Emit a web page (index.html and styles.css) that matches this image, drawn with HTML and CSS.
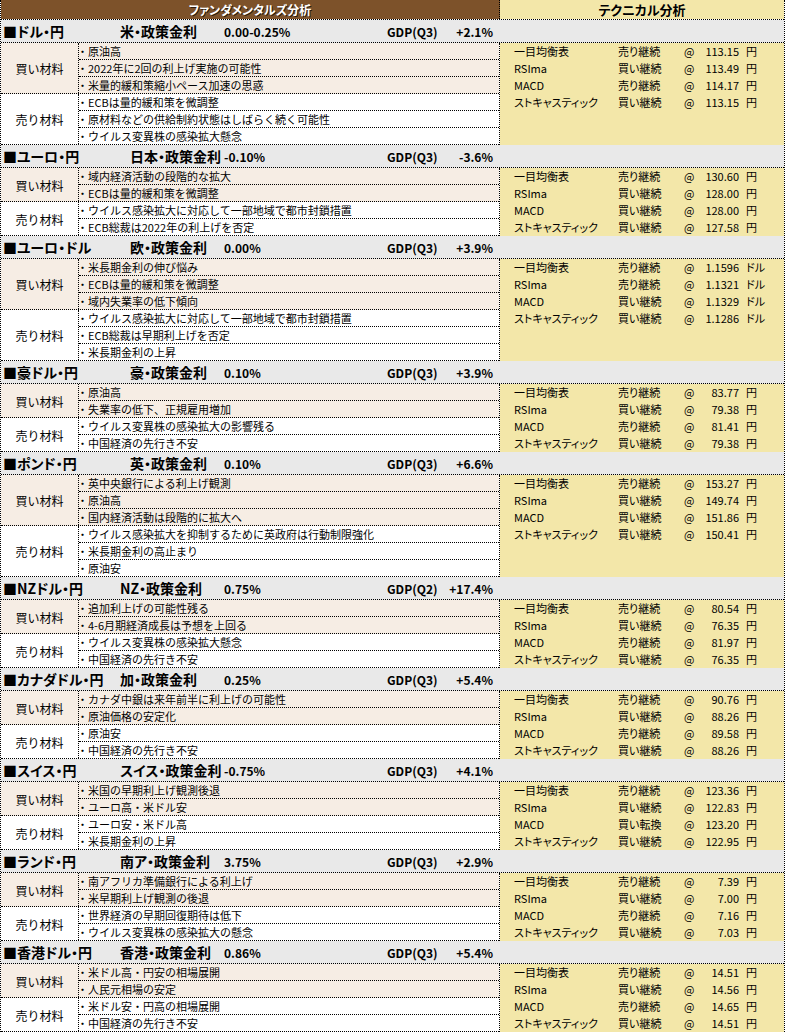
FILE: index.html
```html
<!DOCTYPE html>
<html lang="ja">
<head>
<meta charset="utf-8">
<title>ファンダメンタルズ分析 / テクニカル分析</title>
<link rel="stylesheet" href="styles.css">
</head>
<body>
<div class="sheet">
  <div class="head">
    <div class="h-fund">ファンダメンタルズ分析</div>
    <div class="h-tech">テクニカル分析</div>
  </div>

  <section class="pair">
    <div class="pair-head"><span class="pname">■ドル・円</span><span class="rname">米・政策金利</span><span class="rate">0.00-0.25%</span><span class="gdp">GDP(Q3)</span><span class="gval">+2.1%</span></div>
    <div class="pair-body">
      <div class="fund">
        <div class="group buy"><div class="label">買い材料</div><ul class="items"><li>・原油高</li><li>・2022年に2回の利上げ実施の可能性</li><li>・米量的緩和策縮小ペース加速の思惑</li></ul></div>
        <div class="group sell"><div class="label">売り材料</div><ul class="items"><li>・ECBは量的緩和策を微調整</li><li>・原材料などの供給制約状態はしばらく続く可能性</li><li>・ウイルス変異株の感染拡大懸念</li></ul></div>
      </div>
      <div class="tech">
        <div class="trow"><span>一目均衡表</span><span>売り継続</span><span>@</span><span class="price">113.15</span><span class="unit">円</span></div>
        <div class="trow"><span>RSIma</span><span>買い継続</span><span>@</span><span class="price">113.49</span><span class="unit">円</span></div>
        <div class="trow"><span>MACD</span><span>売り継続</span><span>@</span><span class="price">114.17</span><span class="unit">円</span></div>
        <div class="trow"><span>ストキャスティック</span><span>買い継続</span><span>@</span><span class="price">113.15</span><span class="unit">円</span></div>
      </div>
    </div>
  </section>

  <section class="pair">
    <div class="pair-head"><span class="pname">■ユーロ・円</span><span class="rname indent">日本・政策金利</span><span class="rate">-0.10%</span><span class="gdp">GDP(Q3)</span><span class="gval">-3.6%</span></div>
    <div class="pair-body">
      <div class="fund">
        <div class="group buy"><div class="label">買い材料</div><ul class="items"><li>・域内経済活動の段階的な拡大</li><li>・ECBは量的緩和策を微調整</li></ul></div>
        <div class="group sell"><div class="label">売り材料</div><ul class="items"><li>・ウイルス感染拡大に対応して一部地域で都市封鎖措置</li><li>・ECB総裁は2022年の利上げを否定</li></ul></div>
      </div>
      <div class="tech">
        <div class="trow"><span>一目均衡表</span><span>売り継続</span><span>@</span><span class="price">130.60</span><span class="unit">円</span></div>
        <div class="trow"><span>RSIma</span><span>買い継続</span><span>@</span><span class="price">128.00</span><span class="unit">円</span></div>
        <div class="trow"><span>MACD</span><span>買い継続</span><span>@</span><span class="price">128.00</span><span class="unit">円</span></div>
        <div class="trow"><span>ストキャスティック</span><span>買い継続</span><span>@</span><span class="price">127.58</span><span class="unit">円</span></div>
      </div>
    </div>
  </section>

  <section class="pair">
    <div class="pair-head"><span class="pname">■ユーロ・ドル</span><span class="rname indent">欧・政策金利</span><span class="rate">0.00%</span><span class="gdp">GDP(Q3)</span><span class="gval">+3.9%</span></div>
    <div class="pair-body">
      <div class="fund">
        <div class="group buy"><div class="label">買い材料</div><ul class="items"><li>・米長期金利の伸び悩み</li><li>・ECBは量的緩和策を微調整</li><li>・域内失業率の低下傾向</li></ul></div>
        <div class="group sell"><div class="label">売り材料</div><ul class="items"><li>・ウイルス感染拡大に対応して一部地域で都市封鎖措置</li><li>・ECB総裁は早期利上げを否定</li><li>・米長期金利の上昇</li></ul></div>
      </div>
      <div class="tech">
        <div class="trow"><span>一目均衡表</span><span>売り継続</span><span>@</span><span class="price">1.1596</span><span class="unit">ドル</span></div>
        <div class="trow"><span>RSIma</span><span>売り継続</span><span>@</span><span class="price">1.1321</span><span class="unit">ドル</span></div>
        <div class="trow"><span>MACD</span><span>買い継続</span><span>@</span><span class="price">1.1329</span><span class="unit">ドル</span></div>
        <div class="trow"><span>ストキャスティック</span><span>買い継続</span><span>@</span><span class="price">1.1286</span><span class="unit">ドル</span></div>
      </div>
    </div>
  </section>

  <section class="pair">
    <div class="pair-head"><span class="pname">■豪ドル・円</span><span class="rname indent">豪・政策金利</span><span class="rate">0.10%</span><span class="gdp">GDP(Q3)</span><span class="gval">+3.9%</span></div>
    <div class="pair-body">
      <div class="fund">
        <div class="group buy"><div class="label">買い材料</div><ul class="items"><li>・原油高</li><li>・失業率の低下、正規雇用増加</li></ul></div>
        <div class="group sell"><div class="label">売り材料</div><ul class="items"><li>・ウイルス変異株の感染拡大の影響残る</li><li>・中国経済の先行き不安</li></ul></div>
      </div>
      <div class="tech">
        <div class="trow"><span>一目均衡表</span><span>売り継続</span><span>@</span><span class="price">83.77</span><span class="unit">円</span></div>
        <div class="trow"><span>RSIma</span><span>買い継続</span><span>@</span><span class="price">79.38</span><span class="unit">円</span></div>
        <div class="trow"><span>MACD</span><span>売り継続</span><span>@</span><span class="price">81.41</span><span class="unit">円</span></div>
        <div class="trow"><span>ストキャスティック</span><span>買い継続</span><span>@</span><span class="price">79.38</span><span class="unit">円</span></div>
      </div>
    </div>
  </section>

  <section class="pair">
    <div class="pair-head"><span class="pname">■ポンド・円</span><span class="rname indent">英・政策金利</span><span class="rate">0.10%</span><span class="gdp">GDP(Q3)</span><span class="gval">+6.6%</span></div>
    <div class="pair-body">
      <div class="fund">
        <div class="group buy"><div class="label">買い材料</div><ul class="items"><li>・英中央銀行による利上げ観測</li><li>・原油高</li><li>・国内経済活動は段階的に拡大へ</li></ul></div>
        <div class="group sell"><div class="label">売り材料</div><ul class="items"><li>・ウイルス感染拡大を抑制するために英政府は行動制限強化</li><li>・米長期金利の高止まり</li><li>・原油安</li></ul></div>
      </div>
      <div class="tech">
        <div class="trow"><span>一目均衡表</span><span>売り継続</span><span>@</span><span class="price">153.27</span><span class="unit">円</span></div>
        <div class="trow"><span>RSIma</span><span>買い継続</span><span>@</span><span class="price">149.74</span><span class="unit">円</span></div>
        <div class="trow"><span>MACD</span><span>買い継続</span><span>@</span><span class="price">151.86</span><span class="unit">円</span></div>
        <div class="trow"><span>ストキャスティック</span><span>買い継続</span><span>@</span><span class="price">150.41</span><span class="unit">円</span></div>
      </div>
    </div>
  </section>

  <section class="pair">
    <div class="pair-head"><span class="pname">■NZドル・円</span><span class="rname">NZ・政策金利</span><span class="rate">0.75%</span><span class="gdp">GDP(Q2)</span><span class="gval">+17.4%</span></div>
    <div class="pair-body">
      <div class="fund">
        <div class="group buy"><div class="label">買い材料</div><ul class="items"><li>・追加利上げの可能性残る</li><li>・4-6月期経済成長は予想を上回る</li></ul></div>
        <div class="group sell"><div class="label">売り材料</div><ul class="items"><li>・ウイルス変異株の感染拡大懸念</li><li>・中国経済の先行き不安</li></ul></div>
      </div>
      <div class="tech">
        <div class="trow"><span>一目均衡表</span><span>売り継続</span><span>@</span><span class="price">80.54</span><span class="unit">円</span></div>
        <div class="trow"><span>RSIma</span><span>買い継続</span><span>@</span><span class="price">76.35</span><span class="unit">円</span></div>
        <div class="trow"><span>MACD</span><span>売り継続</span><span>@</span><span class="price">81.97</span><span class="unit">円</span></div>
        <div class="trow"><span>ストキャスティック</span><span>買い継続</span><span>@</span><span class="price">76.35</span><span class="unit">円</span></div>
      </div>
    </div>
  </section>

  <section class="pair">
    <div class="pair-head"><span class="pname">■カナダドル・円</span><span class="rname">加・政策金利</span><span class="rate">0.25%</span><span class="gdp">GDP(Q3)</span><span class="gval">+5.4%</span></div>
    <div class="pair-body">
      <div class="fund">
        <div class="group buy"><div class="label">買い材料</div><ul class="items"><li>・カナダ中銀は来年前半に利上げの可能性</li><li>・原油価格の安定化</li></ul></div>
        <div class="group sell"><div class="label">売り材料</div><ul class="items"><li>・原油安</li><li>・中国経済の先行き不安</li></ul></div>
      </div>
      <div class="tech">
        <div class="trow"><span>一目均衡表</span><span>売り継続</span><span>@</span><span class="price">90.76</span><span class="unit">円</span></div>
        <div class="trow"><span>RSIma</span><span>買い継続</span><span>@</span><span class="price">88.26</span><span class="unit">円</span></div>
        <div class="trow"><span>MACD</span><span>売り継続</span><span>@</span><span class="price">89.58</span><span class="unit">円</span></div>
        <div class="trow"><span>ストキャスティック</span><span>買い継続</span><span>@</span><span class="price">88.26</span><span class="unit">円</span></div>
      </div>
    </div>
  </section>

  <section class="pair">
    <div class="pair-head"><span class="pname">■スイス・円</span><span class="rname">スイス・政策金利</span><span class="rate">-0.75%</span><span class="gdp">GDP(Q3)</span><span class="gval">+4.1%</span></div>
    <div class="pair-body">
      <div class="fund">
        <div class="group buy"><div class="label">買い材料</div><ul class="items"><li>・米国の早期利上げ観測後退</li><li>・ユーロ高・米ドル安</li></ul></div>
        <div class="group sell"><div class="label">売り材料</div><ul class="items"><li>・ユーロ安・米ドル高</li><li>・米長期金利の上昇</li></ul></div>
      </div>
      <div class="tech">
        <div class="trow"><span>一目均衡表</span><span>売り継続</span><span>@</span><span class="price">123.36</span><span class="unit">円</span></div>
        <div class="trow"><span>RSIma</span><span>買い継続</span><span>@</span><span class="price">122.83</span><span class="unit">円</span></div>
        <div class="trow"><span>MACD</span><span>買い転換</span><span>@</span><span class="price">123.20</span><span class="unit">円</span></div>
        <div class="trow"><span>ストキャスティック</span><span>買い継続</span><span>@</span><span class="price">122.95</span><span class="unit">円</span></div>
      </div>
    </div>
  </section>

  <section class="pair">
    <div class="pair-head"><span class="pname">■ランド・円</span><span class="rname">南ア・政策金利</span><span class="rate">3.75%</span><span class="gdp">GDP(Q3)</span><span class="gval">+2.9%</span></div>
    <div class="pair-body">
      <div class="fund">
        <div class="group buy"><div class="label">買い材料</div><ul class="items"><li>・南アフリカ準備銀行による利上げ</li><li>・米早期利上げ観測の後退</li></ul></div>
        <div class="group sell"><div class="label">売り材料</div><ul class="items"><li>・世界経済の早期回復期待は低下</li><li>・ウイルス変異株の感染拡大の懸念</li></ul></div>
      </div>
      <div class="tech">
        <div class="trow"><span>一目均衡表</span><span>売り継続</span><span>@</span><span class="price">7.39</span><span class="unit">円</span></div>
        <div class="trow"><span>RSIma</span><span>買い継続</span><span>@</span><span class="price">7.00</span><span class="unit">円</span></div>
        <div class="trow"><span>MACD</span><span>売り継続</span><span>@</span><span class="price">7.16</span><span class="unit">円</span></div>
        <div class="trow"><span>ストキャスティック</span><span>買い継続</span><span>@</span><span class="price">7.03</span><span class="unit">円</span></div>
      </div>
    </div>
  </section>

  <section class="pair">
    <div class="pair-head"><span class="pname">■香港ドル・円</span><span class="rname">香港・政策金利</span><span class="rate">0.86%</span><span class="gdp">GDP(Q3)</span><span class="gval">+5.4%</span></div>
    <div class="pair-body">
      <div class="fund">
        <div class="group buy"><div class="label">買い材料</div><ul class="items"><li>・米ドル高・円安の相場展開</li><li>・人民元相場の安定</li></ul></div>
        <div class="group sell"><div class="label">売り材料</div><ul class="items"><li>・米ドル安・円高の相場展開</li><li>・中国経済の先行き不安</li></ul></div>
      </div>
      <div class="tech">
        <div class="trow"><span>一目均衡表</span><span>売り継続</span><span>@</span><span class="price">14.51</span><span class="unit">円</span></div>
        <div class="trow"><span>RSIma</span><span>買い継続</span><span>@</span><span class="price">14.56</span><span class="unit">円</span></div>
        <div class="trow"><span>MACD</span><span>売り継続</span><span>@</span><span class="price">14.65</span><span class="unit">円</span></div>
        <div class="trow"><span>ストキャスティック</span><span>買い継続</span><span>@</span><span class="price">14.51</span><span class="unit">円</span></div>
      </div>
    </div>
  </section>
</div>
</body>
</html>
```

FILE: styles.css
```css
* { box-sizing: border-box; }

body {
  margin: 0;
  background: #ffffff;
  color: #000000;
  font-family: "Noto Sans CJK JP", "Noto Sans", sans-serif;
}

.sheet {
  width: 785px;
  border-left: 1px dotted #000;
  border-right: 1px dotted #000;
}

/* top header */
.head {
  display: flex;
  height: 20px;
  border-bottom: 1px dotted #000;
}
.h-fund {
  width: 499px;
  flex: none;
  background: #7d522a;
  border-right: 1px dotted #000;
  color: #ffffff;
  font-weight: bold;
  font-size: 12px;
  line-height: 19px;
  text-align: center;
  font-feature-settings: "palt" 1;
  text-shadow: 1px 1px 0 #2e1c0c;
}
.h-tech {
  flex: 1;
  background: #f3e7a9;
  font-weight: bold;
  font-size: 13px;
  line-height: 19px;
  text-align: center;
  font-feature-settings: "palt" 1;
}

/* pair section header */
.pair-head {
  display: grid;
  grid-template-columns: 117px 104px 163px 58px 48px 1fr;
  align-items: center;
  height: 23px;
  padding-left: 2px;
  background: #e9e9e9;
  border-bottom: 1px dotted #000;
  font-weight: bold;
  white-space: nowrap;
}
.pname, .rname {
  font-size: 14px;
  font-feature-settings: "palt" 1;
}
.rname.indent { padding-left: 10px; }
.rate, .gdp, .gval {
  font-size: 12px;
}
.gval { text-align: right; }

/* body */
.pair-body {
  display: flex;
}
.fund {
  width: 499px;
  flex: none;
  border-right: 1px dotted #000;
}
.group {
  display: flex;
  border-bottom: 1px dotted #000;
}
.group.buy { background: #f6ede4; }
.group.sell { background: #ffffff; }

.label {
  width: 78px;
  flex: none;
  border-right: 1px dotted #000;
  display: flex;
  align-items: center;
  justify-content: center;
  font-size: 12px;
  padding-top: 1px;
}
.items {
  flex: 1;
  list-style: none;
  margin: 0;
  padding: 0;
}
.items li {
  height: 16px;
  line-height: 17px;
  font-size: 11px;
  white-space: nowrap;
  text-indent: -3px;
  padding-left: 1px;
}
.items li + li {
  height: 17px;
  border-top: 1px dotted #000;
}

/* technical */
.tech {
  flex: 1;
  background: #f3e7a9;
}
.trow {
  display: grid;
  grid-template-columns: 104px 66px 18px 37px 1fr;
  height: 17px;
  line-height: 17px;
  padding-left: 14px;
  font-size: 11px;
  white-space: nowrap;
  font-feature-settings: "palt" 1;
}
.price { text-align: right; }
.unit { padding-left: 7px; }
```
